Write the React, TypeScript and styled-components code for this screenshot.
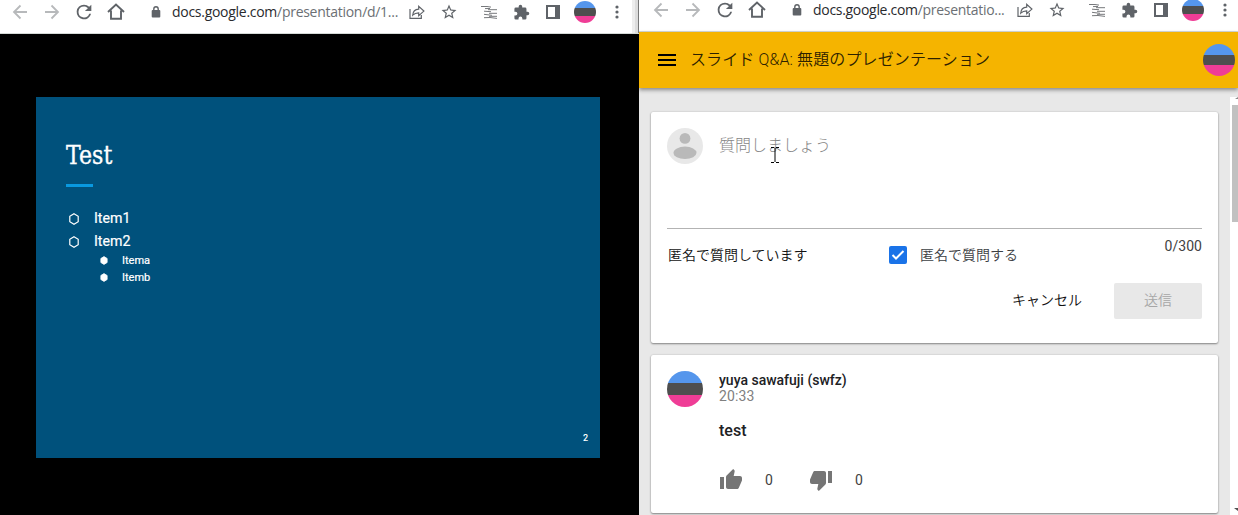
import React from 'react';
import styled, { createGlobalStyle } from 'styled-components';

const GlobalStyle = createGlobalStyle`
  * { box-sizing: border-box; }
  body { margin: 0; overflow: hidden; background: #000; font-family: Roboto, "Noto Sans CJK JP", sans-serif; }
  svg { display: block; flex: none; }
`;

const Desktop = styled.div`
  display: grid;
  grid-template-columns: 639px 599px;
  width: 1238px;
  height: 515px;
  overflow: hidden;
`;

const BrowserWindow = styled.section`
  display: flex;
  flex-direction: column;
  min-width: 0;
  height: 515px;
  overflow: hidden;
`;

const Toolbar = styled.div<{ $height: number; $shift: number; $edge?: boolean }>`
  display: flex;
  flex: none;
  align-items: flex-start;
  height: ${(p) => p.$height}px;
  padding-left: ${(p) => p.$shift}px;
  background: #fff;
  border-bottom: 1px solid #d5dad7;
  box-shadow: ${(p) => (p.$edge ? 'inset -1px 0 #777, inset -4px 0 #dcdcdc, inset -7px 0 #ededed' : 'none')};
`;

const ToolRow = styled.div<{ $top: number }>`
  display: flex;
  align-items: center;
  height: 26px;
  margin-top: ${(p) => p.$top}px;
`;

const Slot = styled.span<{ $w?: number }>`
  display: flex;
  flex: none;
  justify-content: center;
  align-items: center;
  width: ${(p) => p.$w ?? 32}px;
  height: 26px;
`;

const Url = styled.span<{ $w: number; $spacing: number }>`
  flex: none;
  width: ${(p) => p.$w}px;
  margin-left: -8px;
  font: 14px/20px "Open Sans", sans-serif;
  letter-spacing: ${(p) => p.$spacing}px;
  white-space: nowrap;
  color: #6b6f74;
`;

const Host = styled.span`
  color: #292a2d;
`;

const Avatar = styled.span<{ $size: number }>`
  display: block;
  flex: none;
  width: ${(p) => p.$size}px;
  height: ${(p) => p.$size}px;
  border-radius: 50%;
  background: linear-gradient(#5596ec 0 33%, #4e4e4e 33% 66%, #ef3d96 66%);
`;

const Stage = styled.div`
  flex: 1;
  padding: 63px 0 0 36px;
  background: #000;
`;

const Slide = styled.article`
  display: flex;
  flex-direction: column;
  width: 564px;
  height: 361px;
  padding: 38px 12px 12px 30px;
  background: #00517c;
  color: #fff;
`;

const SlideTitle = styled.h1`
  width: max-content;
  margin: 0;
  font: 400 26px/41px "DejaVu Serif", serif;
  transform: scaleX(0.85);
  transform-origin: left;
  -webkit-text-stroke: 0.35px #fff;
`;

const TitleRule = styled.div`
  width: 27px;
  height: 3px;
  margin: 8px 0 20px;
  background: #0999e0;
`;

const Bullets = styled.div<{ $level: 1 | 2 }>`
  display: flex;
  flex-direction: column;
  margin-top: ${(p) => (p.$level === 1 ? 0 : -1)}px;
  padding-left: ${(p) => (p.$level === 1 ? 3 : 34)}px;
  font-size: ${(p) => (p.$level === 1 ? 14.2 : 11)}px;
  line-height: ${(p) => (p.$level === 1 ? 23 : 17)}px;
  -webkit-text-stroke: 0.2px #fff;
`;

const Bullet = styled.div<{ $gap: number }>`
  display: flex;
  align-items: center;
  gap: ${(p) => p.$gap}px;
`;

const PageNumber = styled.span`
  margin-top: auto;
  align-self: flex-end;
  font: 500 9px/16px Roboto, sans-serif;
`;

const AppBar = styled.header`
  position: relative;
  display: flex;
  flex: none;
  align-items: center;
  height: 56px;
  padding: 0 3px 0 19px;
  background: #f5b400;
  box-shadow: 0 2px 4px rgba(0, 0, 0, 0.42);
`;

const AppTitle = styled.h2`
  flex: 1;
  margin: 0 0 0 14px;
  font: 400 16px/24px Roboto, "Noto Sans CJK JP", sans-serif;
  font-weight: 350;
  letter-spacing: 0.12px;
  color: #2c2100;
`;

const Body = styled.div`
  display: flex;
  flex: 1;
  min-height: 0;
  background: #e8e8e8;
`;

const Cards = styled.main`
  display: flex;
  flex-direction: column;
  gap: 12px;
  width: 591px;
  padding: 24px 12px 0;
`;

const Card = styled.section<{ $height: number }>`
  flex: none;
  height: ${(p) => p.$height}px;
  padding: 16px;
  border-radius: 2px;
  background: #fff;
  box-shadow: 0 1px 2px rgba(0, 0, 0, 0.4), 0 0 2px rgba(0, 0, 0, 0.16);
`;

const Scrollbar = styled.div`
  display: flex;
  flex-direction: column;
  align-items: flex-end;
  width: 8px;
  margin-top: 9px;
  background: #fff;
`;

const Thumb = styled.div`
  width: 6px;
  height: 117px;
  margin: 2px 0 auto;
  background: #c1c1c1;
`;

const Composer = styled.div`
  display: flex;
  gap: 16px;
  height: 101px;
  border-bottom: 1px solid #b3b3b3;
`;

const Placeholder = styled.div`
  position: relative;
  padding-top: 6px;
  font-size: 16px;
  line-height: 24px;
  font-weight: 300;
  color: #858585;
`;

const TextCursor = styled.svg`
  position: absolute;
  left: 52px;
  top: 19px;
`;

const Options = styled.div`
  display: grid;
  grid-template-columns: 222px 1fr auto;
  height: 54px;
  padding-top: 16px;
  font-size: 14px;
  line-height: 20px;
`;

const Label = styled.span<{ $indent?: number; $color?: string }>`
  padding-left: ${(p) => p.$indent ?? 0}px;
  font-weight: 350;
  color: ${(p) => p.$color ?? '#111'};
`;

const CheckOption = styled.label`
  display: flex;
  align-items: center;
  height: 20px;
`;

const Checkbox = styled.span`
  display: grid;
  place-items: center;
  width: 18px;
  height: 18px;
  border-radius: 2px;
  background: #1a73e8;
`;

const Counter = styled.span`
  margin-top: -9px;
  letter-spacing: 0.05px;
  color: #424242;
`;

const Actions = styled.div`
  display: flex;
  justify-content: flex-end;
  gap: 16px;
`;

const Button = styled.button<{ $muted?: boolean }>`
  width: ${(p) => (p.$muted ? 88 : 102)}px;
  height: 36px;
  padding: 0 0 2px;
  border: 0;
  border-radius: 2px;
  background: ${(p) => (p.$muted ? '#e8e8e8' : 'transparent')};
  color: ${(p) => (p.$muted ? '#a6a6a6' : '#111')};
  font: 400 14px/20px Roboto, "Noto Sans CJK JP", sans-serif;
  font-weight: 350;
`;

const Question = styled.div`
  display: flex;
  gap: 16px;
`;

const QuestionText = styled.div`
  display: flex;
  flex-direction: column;
  color: #202124;
`;

const Author = styled.span`
  margin-top: 1px;
  font-size: 14px;
  line-height: 16px;
  font-weight: 500;
`;

const Time = styled.span`
  font-size: 14px;
  line-height: 16px;
  letter-spacing: 0.1px;
  color: #808080;
`;

const Message = styled.p`
  margin: 15px 0 25px;
  font-size: 16px;
  line-height: 24px;
  font-weight: 500;
`;

const Votes = styled.div`
  display: flex;
  align-items: center;
  height: 24px;
  font-size: 14px;
  color: #424242;
`;

const VoteCount = styled.span`
  width: 44px;
  margin-left: 22px;
`;

const Arrow = ({ back }: { back?: boolean }) => (
  <svg width="16" height="16" viewBox="0 0 16 16" fill="none" stroke="#b7b9bb" strokeWidth="1.8">
    <path d={back ? 'M15 8H2M8.5 1.5 2 8l6.5 6.5' : 'M1 8h13M7.5 1.5 14 8l-6.5 6.5'} />
  </svg>
);

const Reload = () => (
  <svg width="22" height="22" viewBox="0 0 24 24" fill="#5f6368">
    <path d="M17.65 6.35A7.96 7.96 0 0 0 12 4a8 8 0 1 0 7.73 10h-2.08A6 6 0 1 1 12 6c1.66 0 3.14.69 4.22 1.78L13 11h7V4z" />
  </svg>
);

const Home = () => (
  <svg width="18" height="18" viewBox="0 0 18 18" fill="none" stroke="#5f6368" strokeWidth="1.9">
    <path d="M1 9 9 1.6 17 9M4 7.5v8.2h10V7.5" />
  </svg>
);

const Lock = () => (
  <svg width="10" height="12" viewBox="0 0 10 12">
    <rect x=".7" y="4" width="8.6" height="7.5" rx="1" fill="#5f6368" />
    <path d="M2.8 4.5V3a2.2 2.2 0 0 1 4.4 0v1.5" fill="none" stroke="#5f6368" strokeWidth="1.4" />
  </svg>
);

const Share = () => (
  <svg width="16" height="16" viewBox="0 0 16 16" fill="none" stroke="#5f6368" strokeWidth="1.2">
    <path d="M1 5v9.4h11.3V11M3.7 11.2c.3-4 2.7-6 6-6.1V2.3l5.2 4.8-5.2 4.6V8.8c-2.7 0-4.4.7-6 2.4z" />
  </svg>
);

const Star = () => (
  <svg width="18" height="18" viewBox="0 0 24 24" fill="#5f6368">
    <path d="m22 9.24-7.19-.62L12 2 9.19 8.63 2 9.24l5.46 4.73L5.82 21 12 17.27 18.18 21l-1.63-7.03zM12 15.4l-3.76 2.27 1-4.28-3.32-2.88 4.38-.38L12 6.1l1.71 4.04 4.38.38-3.32 2.88 1 4.28z" />
  </svg>
);

const Strokes = () => (
  <svg width="18" height="14" viewBox="0 0 18 14" fill="none" stroke="#77797c" strokeWidth="1">
    <path d="M1 1.500h6l4 .6M5 3.600l5-.1M8 4.700h9M4 6.200l7 .5M9 8.300h8M4 9.300l8 1M9 11.300h8M4 12.700l6-.2 7 .9" />
  </svg>
);

const Puzzle = () => (
  <svg width="17" height="17" viewBox="0 0 24 24" fill="#5f6368">
    <path d="M20.5 11H19V7a2 2 0 0 0-2-2h-4V3.500a2.500 2.500 0 0 0-5 0V5H4a2 2 0 0 0-2 2v3.800h1.500a2.700 2.700 0 0 1 0 5.400H2V20a2 2 0 0 0 2 2h3.800v-1.500a2.700 2.700 0 0 1 5.400 0V22H17a2 2 0 0 0 2-2v-4h1.500a2.500 2.500 0 0 0 0-5z" />
  </svg>
);

const SidePanel = () => (
  <svg width="14" height="14" viewBox="0 0 14 14" fill="#5f6368">
    <path fillRule="evenodd" d="M0 0h14v14H0zM2 2v10h7V2z" />
  </svg>
);

const Dots = () => (
  <svg width="4" height="14" viewBox="0 0 4 14" fill="#5f6368">
    <circle cx="2" cy="2" r="1.6" />
    <circle cx="2" cy="7" r="1.6" />
    <circle cx="2" cy="12" r="1.6" />
  </svg>
);

const Hexagon = ({ solid }: { solid?: boolean }) => (
  <svg width={solid ? 8 : 10} height={solid ? 9 : 12} viewBox="0 0 10 12">
    <path
      d="M5 .8 9.200 3.300v5.400L5 11.200.8 8.700V3.300z"
      fill={solid ? '#fff' : 'none'}
      stroke="#fff"
      strokeWidth={solid ? 1 : 1.2}
    />
  </svg>
);

const Menu = () => (
  <svg width="18" height="12" viewBox="0 0 18 12" fill="#000">
    <path d="M0 0h18v2H0zM0 5h18v2H0zM0 10h18v2H0z" />
  </svg>
);

const Anonymous = () => (
  <svg width="36" height="36" viewBox="0 0 36 36">
    <circle cx="18" cy="18" r="18" fill="#e8e8e8" />
    <circle cx="18" cy="10.400" r="5.400" fill="#b9b9b9" />
    <ellipse cx="18" cy="24.800" rx="11.500" ry="6.200" fill="#b9b9b9" />
  </svg>
);

const Thumbs = ({ down }: { down?: boolean }) => (
  <svg width="24" height="24" viewBox="0 0 24 24" fill="#757575">
    <path
      d={
        down
          ? 'M15 3H6c-.83 0-1.540.5-1.840 1.220l-3.020 7.050c-.09.23-.14.47-.14.73v2c0 1.100.9 2 2 2h6.310l-.95 4.570-.03.32c0 .41.17.79.44 1.060L9.830 23l6.590-6.590c.36-.36.58-.86.58-1.410V5c0-1.100-.9-2-2-2zm4 0v12h4V3h-4z'
          : 'M1 21h4V9H1v12zm22-11c0-1.100-.9-2-2-2h-6.310l.95-4.570.03-.32c0-.41-.17-.79-.44-1.060L14.170 1 7.590 7.590C7.220 7.950 7 8.450 7 9v10c0 1.100.9 2 2 2h9c.83 0 1.540-.5 1.840-1.220l3.020-7.050c.09-.23.14-.47.14-.73v-2z'
      }
    />
  </svg>
);

type BrowserBarProps = {
  height: number;
  shift: number;
  top: number;
  path: string;
  urlWidth: number;
  spacing: number;
  edge?: boolean;
};

const BrowserBar = ({ height, shift, top, path, urlWidth, spacing, edge }: BrowserBarProps) => (
  <Toolbar $height={height} $shift={shift} $edge={edge}>
    <ToolRow $top={top}>
      <Slot><Arrow back /></Slot>
      <Slot><Arrow /></Slot>
      <Slot><Reload /></Slot>
      <Slot><Home /></Slot>
      <Slot $w={48}><Lock /></Slot>
      <Url $w={urlWidth} $spacing={spacing}>
        <Host>docs.google.com</Host>{path}
      </Url>
      <Slot><Share /></Slot>
      <Slot><Star /></Slot>
      <Slot $w={48}><Strokes /></Slot>
      <Slot $w={16}><Puzzle /></Slot>
      <Slot $w={48}><SidePanel /></Slot>
      <Slot $w={16}><Avatar $size={22} /></Slot>
      <Slot $w={48}><Dots /></Slot>
    </ToolRow>
  </Toolbar>
);

export default function App() {
  return (
    <>
      <GlobalStyle />
      <Desktop>
        <BrowserWindow>
          <BrowserBar height={34} shift={4} top={-1} path="/presentation/d/1..." urlWidth={229} spacing={-0.28} edge />
          <Stage>
            <Slide>
              <SlideTitle>Test</SlideTitle>
              <TitleRule />
              <Bullets $level={1}>
                <Bullet $gap={15}><Hexagon />Item1</Bullet>
                <Bullet $gap={15}><Hexagon />Item2</Bullet>
              </Bullets>
              <Bullets $level={2}>
                <Bullet $gap={14}><Hexagon solid />Itema</Bullet>
                <Bullet $gap={14}><Hexagon solid />Itemb</Bullet>
              </Bullets>
              <PageNumber>2</PageNumber>
            </Slide>
          </Stage>
        </BrowserWindow>
        <BrowserWindow>
          <BrowserBar height={32} shift={6} top={-3} path="/presentatio..." urlWidth={196} spacing={-0.3} />
          <AppBar>
            <Menu />
            <AppTitle>スライド Q&amp;A: 無題のプレゼンテーション</AppTitle>
            <Avatar $size={32} />
          </AppBar>
          <Body>
            <Cards>
              <Card $height={231}>
                <Composer>
                  <Anonymous />
                  <Placeholder>
                    質問しましょう
                    <TextCursor width="8" height="16" viewBox="0 0 8 16" fill="none" stroke="#000">
                      <path d="M0 .5h3m2 0h3M4 1v14M0 15.500h3m2 0h3" />
                    </TextCursor>
                  </Placeholder>
                </Composer>
                <Options>
                  <Label $indent={1}>匿名で質問しています</Label>
                  <CheckOption>
                    <Checkbox>
                      <svg width="14" height="12" viewBox="0 0 14 12" fill="none" stroke="#fff" strokeWidth="2">
                        <path d="m1.500 6 3.500 3.500L12.500 2" />
                      </svg>
                    </Checkbox>
                    <Label $indent={13} $color="#3c4043">匿名で質問する</Label>
                  </CheckOption>
                  <Counter>0/300</Counter>
                </Options>
                <Actions>
                  <Button>キャンセル</Button>
                  <Button $muted>送信</Button>
                </Actions>
              </Card>
              <Card $height={158}>
                <Question>
                  <Avatar $size={36} />
                  <QuestionText>
                    <Author>yuya sawafuji (swfz)</Author>
                    <Time>20:33</Time>
                    <Message>test</Message>
                    <Votes>
                      <Thumbs />
                      <VoteCount>0</VoteCount>
                      <Thumbs down />
                      <VoteCount>0</VoteCount>
                    </Votes>
                  </QuestionText>
                </Question>
              </Card>
            </Cards>
            <Scrollbar>
              <svg width="6" height="6" viewBox="0 0 6 6"><path d="M3 2 6 0v2z" fill="#888" /></svg>
              <Thumb />
              <svg width="6" height="8" viewBox="0 0 6 8"><path d="M2 1h4v3z" fill="#505050" /></svg>
            </Scrollbar>
          </Body>
        </BrowserWindow>
      </Desktop>
    </>
  );
}
